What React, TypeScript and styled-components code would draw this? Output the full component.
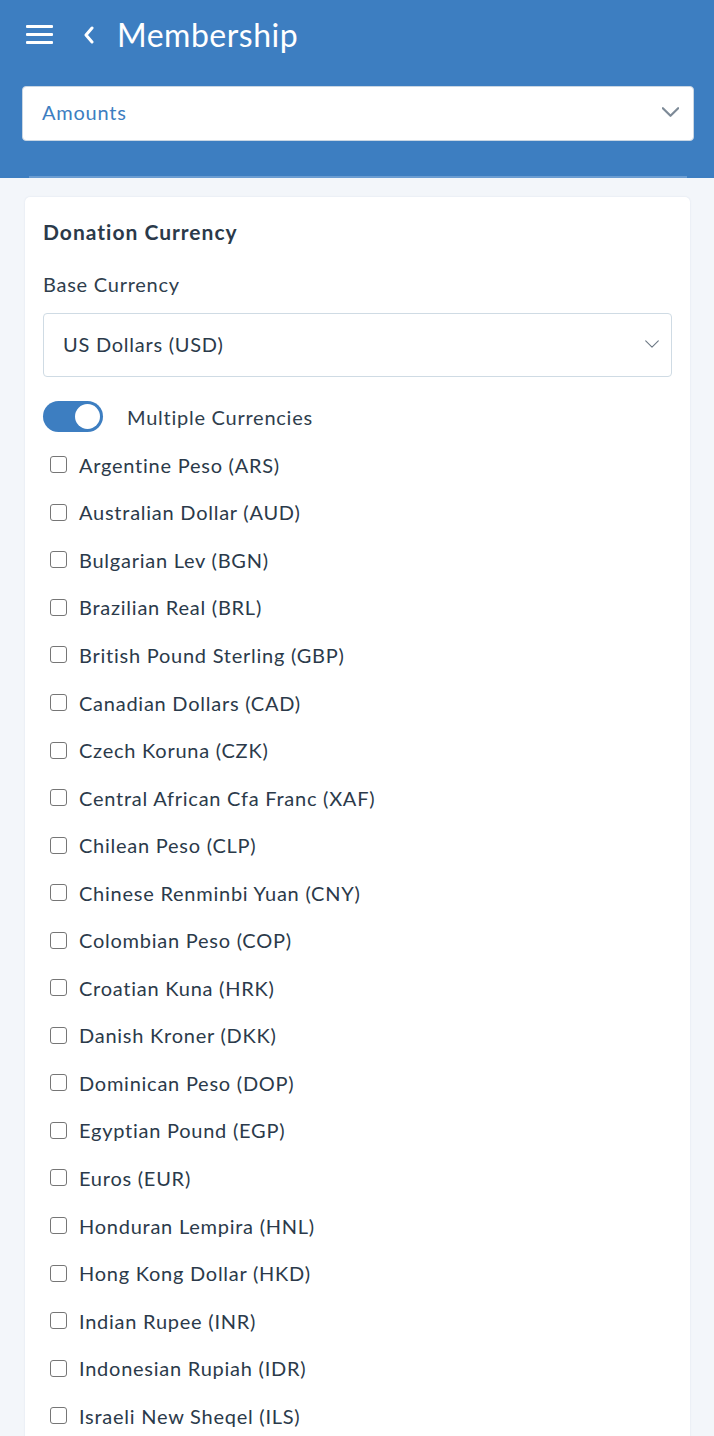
import React from "react";
import styled, { createGlobalStyle } from "styled-components";

const Global = createGlobalStyle`
  html, body { margin: 0; padding: 0; background: #f3f6fa; }
  body { font-family: Lato, "Open Sans", sans-serif; -webkit-font-smoothing: antialiased; }
  * { box-sizing: border-box; }
`;

const Page = styled.div`
  width: 714px;
  height: 1436px;
  background: #f3f6fa;
  overflow: hidden;
`;

const Header = styled.header`
  background: #3d7ec1;
  padding: 0 20px 0 22px;
  height: 178px;
  display: flex;
  flex-direction: column;
  position: relative;
`;

const TopBar = styled.div`
  display: flex;
  align-items: center;
  height: 70px;
  padding-left: 4px;
`;

const Title = styled.h1`
  margin: 0 0 0 22px;
  color: #fff;
  font-size: 32px;
  font-weight: 400;
  line-height: 36px;
  letter-spacing: 0.5px;
`;

const IconButton = styled.span<{ $ml?: number }>`
  display: inline-flex;
  margin-left: ${(p) => p.$ml ?? 0}px;
  color: #fff;
`;

const Select = styled.div<{ $h: number; $border: string }>`
  height: ${(p) => p.$h}px;
  background: #fff;
  border: 1px solid ${(p) => p.$border};
  border-radius: 4px;
  display: flex;
  align-items: center;
  justify-content: space-between;
`;

const TopSelect = styled(Select)`
  margin-top: 16px;
  padding: 0 14px 3px 19px;
`;

const SelectText = styled.span<{ $color: string }>`
  color: ${(p) => p.$color};
  font-size: 20px;
  letter-spacing: 0.75px;
  line-height: 24px;
`;

const Stripe = styled.div`
  position: absolute;
  left: 29px;
  right: 27px;
  bottom: 0;
  height: 2px;
  background: #6b9dd2;
`;

const Body = styled.main`
  padding: 19px 24px 0 25px;
`;

const Card = styled.section`
  background: #fff;
  border-radius: 5px;
  box-shadow: 0 0 2px rgba(40, 80, 130, 0.12);
  padding: 20px 18px 0 18px;
  height: 1300px;
`;

const CardTitle = styled.h2`
  margin: 0;
  font-size: 21px;
  font-weight: 700;
  color: #2b3a4a;
  line-height: 30px;
  letter-spacing: 1px;
`;

const Label = styled.div`
  margin-top: 25px;
  font-size: 20px;
  letter-spacing: 0.75px;
  color: #2f3e4d;
  line-height: 24px;
`;

const BaseSelect = styled(Select)`
  margin-top: 17px;
  padding: 0 12px 2px 19px;
`;

const ToggleRow = styled.div`
  display: flex;
  align-items: center;
  margin-top: 24px;
  gap: 24px;
`;

const Toggle = styled.span`
  width: 60px;
  height: 31px;
  border-radius: 16px;
  background: #3d7ec1;
  position: relative;
  flex: none;
`;

const Knob = styled.span`
  position: absolute;
  right: 3px;
  top: 3px;
  width: 25px;
  height: 25px;
  border-radius: 50%;
  background: #fff;
`;

const ToggleLabel = styled.span`
  font-size: 20px;
  letter-spacing: 0.75px;
  color: #2f3e4d;
  line-height: 24px;
`;

const List = styled.ul`
  list-style: none;
  margin: 9px 0 0 0;
  padding: 0 0 0 7px;
`;

const Item = styled.li`
  display: flex;
  align-items: center;
  height: 47.55px;
  gap: 12px;
`;

const Box = styled.span`
  width: 17px;
  height: 17px;
  border: 1.5px solid #767676;
  border-radius: 3px;
  flex: none;
`;

const ItemText = styled.span`
  font-size: 20px;
  letter-spacing: 0.75px;
  color: #2b3a4a;
  line-height: 24px;
`;

const currencies = [
  "Argentine Peso (ARS)",
  "Australian Dollar (AUD)",
  "Bulgarian Lev (BGN)",
  "Brazilian Real (BRL)",
  "British Pound Sterling (GBP)",
  "Canadian Dollars (CAD)",
  "Czech Koruna (CZK)",
  "Central African Cfa Franc (XAF)",
  "Chilean Peso (CLP)",
  "Chinese Renminbi Yuan (CNY)",
  "Colombian Peso (COP)",
  "Croatian Kuna (HRK)",
  "Danish Kroner (DKK)",
  "Dominican Peso (DOP)",
  "Egyptian Pound (EGP)",
  "Euros (EUR)",
  "Honduran Lempira (HNL)",
  "Hong Kong Dollar (HKD)",
  "Indian Rupee (INR)",
  "Indonesian Rupiah (IDR)",
  "Israeli New Sheqel (ILS)",
];

const Chevron = ({ color, w, h, sw }: { color: string; w: number; h: number; sw: number }) => (
  <svg width={w} height={h} viewBox="0 0 20 11" fill="none">
    <path d="M1 1l9 9 9-9" stroke={color} strokeWidth={sw} strokeLinecap="round" strokeLinejoin="round" />
  </svg>
);

export default function App() {
  return (
    <Page>
      <Global />
      <Header>
        <TopBar>
          <IconButton>
            <svg width="28" height="20" viewBox="0 0 28 20">
              <rect x="0" y="0" width="27" height="3" rx="1" fill="#fff" />
              <rect x="0" y="8" width="27" height="3" rx="1" fill="#fff" />
              <rect x="0" y="16" width="27" height="3" rx="1" fill="#fff" />
            </svg>
          </IconButton>
          <IconButton $ml={29}>
            <svg width="12" height="18" viewBox="0 0 12 18">
              <path d="M9 2L3 9l6 7" stroke="#fff" strokeWidth="3" fill="none" strokeLinecap="round" strokeLinejoin="round" />
            </svg>
          </IconButton>
          <Title>Membership</Title>
        </TopBar>
        <TopSelect $h={55} $border="#c9d6e3">
          <SelectText $color="#3d7ec1">Amounts</SelectText>
          <Chevron color="#7d8a97" w={17} h={10} sw={2.6} />
        </TopSelect>
        <Stripe />
      </Header>
      <Body>
        <Card>
          <CardTitle>Donation Currency</CardTitle>
          <Label>Base Currency</Label>
          <BaseSelect $h={64} $border="#cfdbe4">
            <SelectText $color="#2b3a4a">US Dollars (USD)</SelectText>
            <Chevron color="#6d7985" w={14} h={8} sw={1.6} />
          </BaseSelect>
          <ToggleRow>
            <Toggle>
              <Knob />
            </Toggle>
            <ToggleLabel>Multiple Currencies</ToggleLabel>
          </ToggleRow>
          <List>
            {currencies.map((c) => (
              <Item key={c}>
                <Box />
                <ItemText>{c}</ItemText>
              </Item>
            ))}
          </List>
        </Card>
      </Body>
    </Page>
  );
}
